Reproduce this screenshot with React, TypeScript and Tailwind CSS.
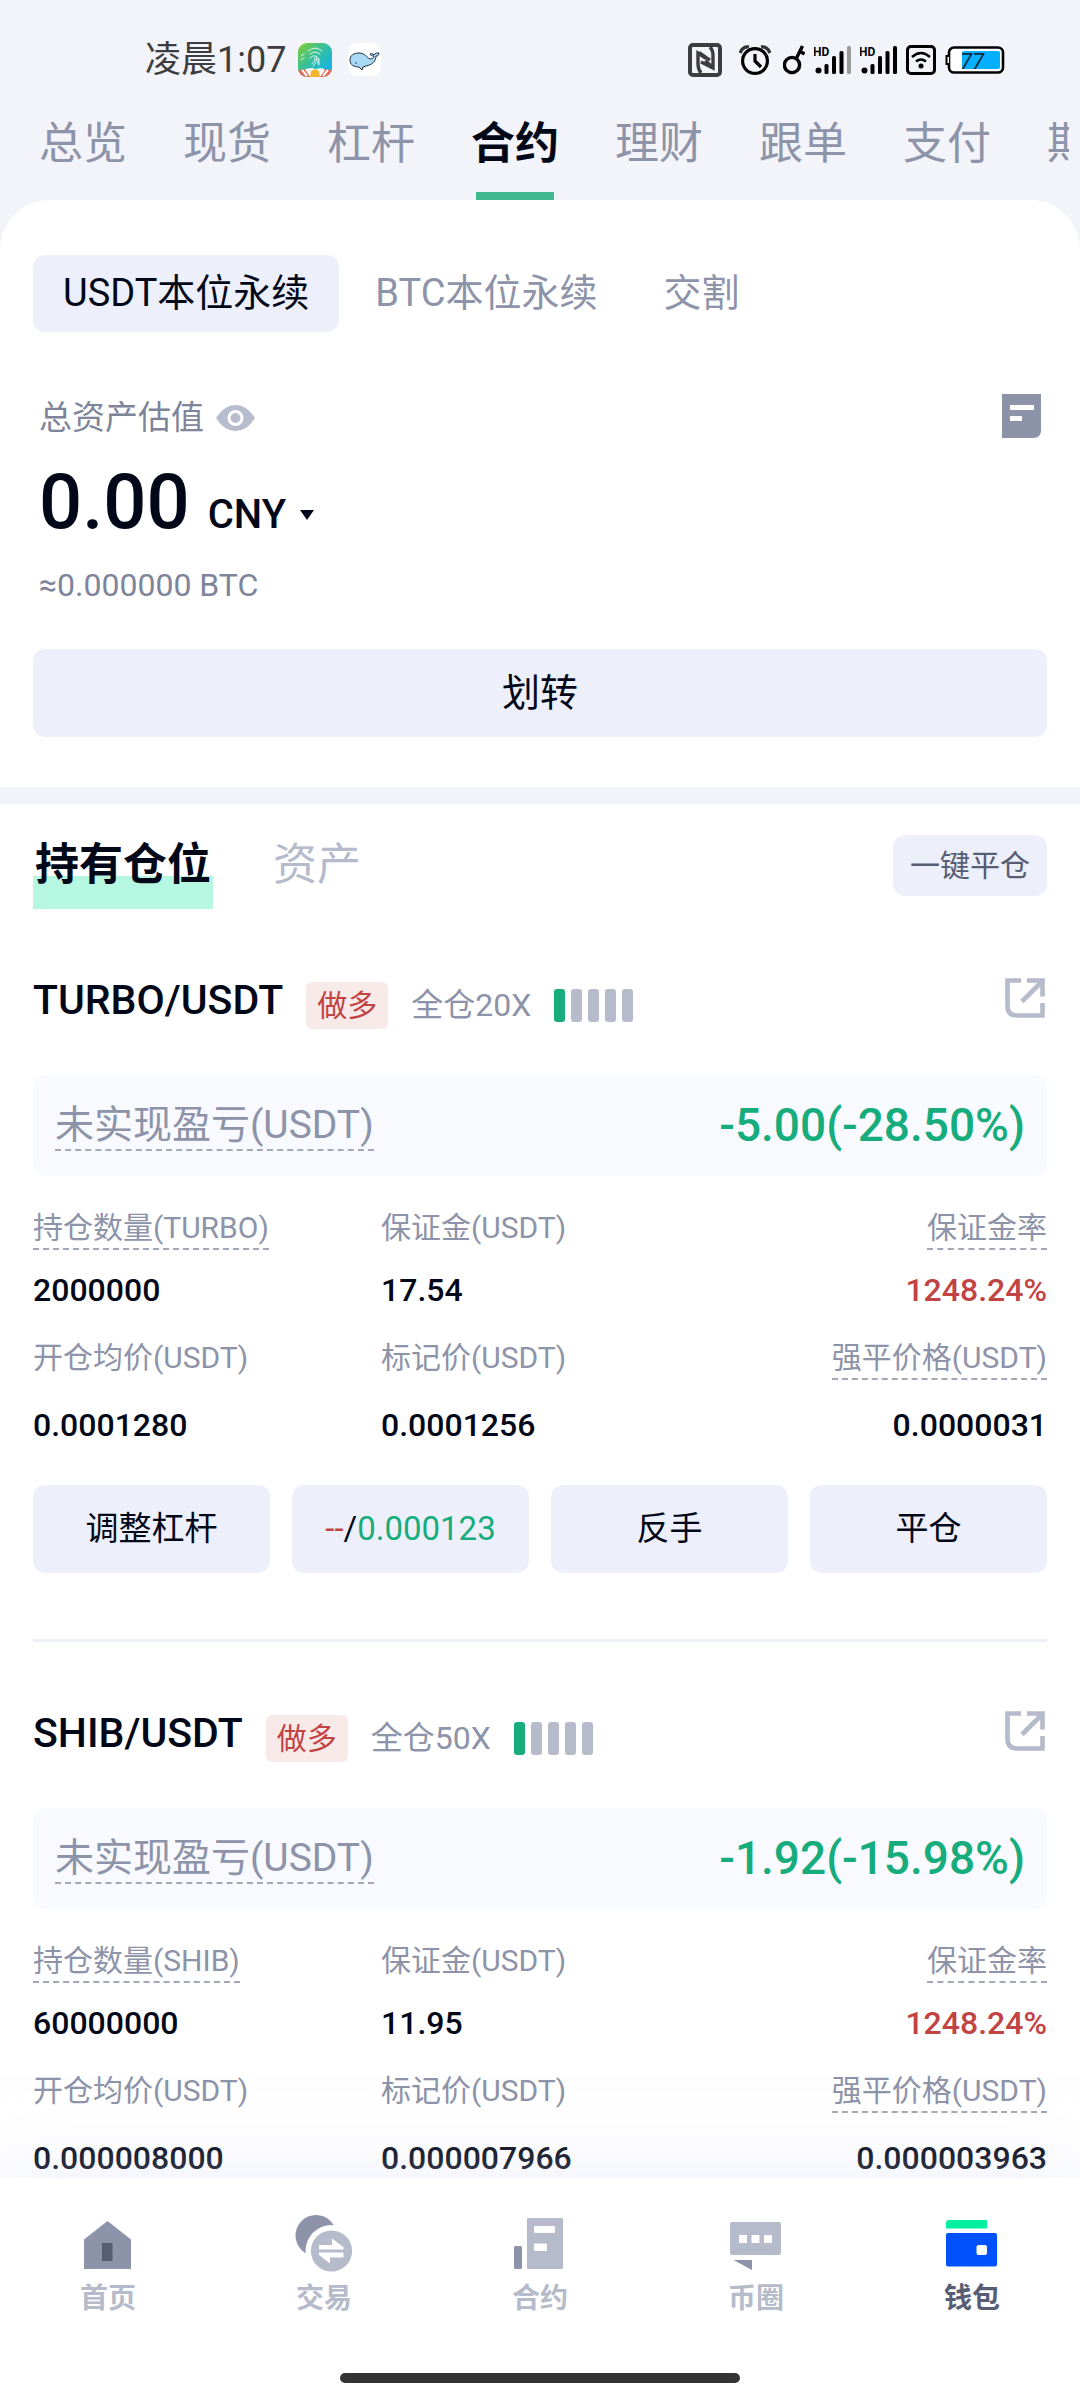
// src/App.tsx
// ================== IMPORTS
import { useState } from "react";
import type { ReactNode } from "react";
import clsx from "clsx";

// ================== TYPES
type Field = {
	label: string;
	value: string;
	dashed?: boolean;
	danger?: boolean;
};

type Position = {
	pair: string;
	side: string;
	leverage: string;
	pnl: string;
	size: Field[];
	price: Field[];
	stop?: string;
};

type NavItem = {
	label: string;
	icon: ReactNode;
};

// ================== DATA
const accountTabs = ["总览", "现货", "杠杆", "合约", "理财", "跟单", "支付", "期权"];

const contractTabs = ["USDT本位永续", "BTC本位永续", "交割"];

const positions: Position[] = [
	{
		pair: "TURBO/USDT",
		side: "做多",
		leverage: "全仓20X",
		pnl: "-5.00(-28.50%)",
		size: [
			{ label: "持仓数量(TURBO)", value: "2000000", dashed: true },
			{ label: "保证金(USDT)", value: "17.54" },
			{ label: "保证金率", value: "1248.24%", dashed: true, danger: true },
		],
		price: [
			{ label: "开仓均价(USDT)", value: "0.0001280" },
			{ label: "标记价(USDT)", value: "0.0001256" },
			{ label: "强平价格(USDT)", value: "0.0000031", dashed: true },
		],
		stop: "0.000123",
	},
	{
		pair: "SHIB/USDT",
		side: "做多",
		leverage: "全仓50X",
		pnl: "-1.92(-15.98%)",
		size: [
			{ label: "持仓数量(SHIB)", value: "60000000", dashed: true },
			{ label: "保证金(USDT)", value: "11.95" },
			{ label: "保证金率", value: "1248.24%", dashed: true, danger: true },
		],
		price: [
			{ label: "开仓均价(USDT)", value: "0.000008000" },
			{ label: "标记价(USDT)", value: "0.000007966" },
			{ label: "强平价格(USDT)", value: "0.000003963", dashed: true },
		],
	},
];

// ================== STATUS BAR ICONS
const FingerprintApp = () => (
	<svg width="34" height="34" viewBox="0 0 34 34" aria-hidden="true">
		<defs>
			<linearGradient id="finger" x1="0" y1="0" x2="1" y2="1">
				<stop offset="0" stopColor="#86cf2c" />
				<stop offset="0.45" stopColor="#35bfa0" />
				<stop offset="1" stopColor="#04b0ff" />
			</linearGradient>
			<clipPath id="fingerClip">
				<rect width="34" height="34" rx="9" />
			</clipPath>
		</defs>
		<g clipPath="url(#fingerClip)">
			<rect width="34" height="34" fill="url(#finger)" />
			<g fill="none" stroke="#d9f5ec" strokeWidth="1" strokeLinecap="round">
				<path d="M10 8q7-6 14 0M12 11q5-4 10 0M12 15q5-5 9 1v6M14 21q3-2 3-6M18 14q2 4-3 9M20 16v5M3 13l3-2M3 17l3-2" />
			</g>
			<path d="M0 27l9-1h16l9 1v7H0z" fill="#e9654e" />
			<path d="M7 26l7-1 4 1 6-1 3 2-5 7H12z" fill="#fff" />
			<path d="M13 28l4-2 4 2 1 6H12z" fill="#f2b630" />
			<path d="M4 27l5 6M30 27l-5 6" stroke="#fff" strokeWidth="2" />
		</g>
	</svg>
);

const WhaleApp = () => (
	<svg width="33" height="33" viewBox="0 0 33 33" aria-hidden="true">
		<rect width="33" height="33" rx="9" fill="#fff" />
		<path
			d="M2 17c0-5 4-7 9-7 6 0 8 5 11 6 2 0 4-1 4-3-2 0-4-1-4-2 2-1 3 0 4 1 1-2 3-2 5-2 0 2-1 3-3 3 0 5-4 9-10 10l-3 1-1 3-3-3c-5 0-9-2-9-7z"
			fill="#a9daf5"
			stroke="#20303d"
			strokeWidth="1"
			strokeLinejoin="round"
		/>
		<circle cx="8" cy="20" r="0.8" fill="#20303d" />
	</svg>
);

const NfcIcon = () => (
	<svg width="34" height="34" viewBox="0 0 34 34" fill="none" stroke="#3d3d3f" aria-hidden="true">
		<rect x="2" y="2" width="30" height="30" rx="3" strokeWidth="4" />
		<path d="M13 30q-3-4-3-9V10l12 7M22 4q3 3 3 9v12l-12-6" strokeWidth="3.4" />
		<path d="M11 10l7 5M24 24l-7-6" strokeWidth="4" />
	</svg>
);

const AlarmIcon = () => (
	<svg width="32" height="30" viewBox="0 0 32 30" fill="none" stroke="#000" aria-hidden="true">
		<circle cx="16" cy="16" r="12.4" strokeWidth="3.2" />
		<path d="M16 9v7l6 6" strokeWidth="3.2" />
		<path d="M1 8Q4 1 10 2M31 8Q28 1 22 2" strokeWidth="3.4" stroke="#333" />
	</svg>
);

const KeyIcon = () => (
	<svg width="22" height="30" viewBox="0 0 22 30" fill="none" stroke="#000" aria-hidden="true">
		<circle cx="9" cy="20" r="7.6" strokeWidth="3.4" />
		<path d="M13 14L19.500 1M16.500 6l5 3" strokeWidth="3.4" />
	</svg>
);

const SignalIcon = ({ last }: { last: string }) => (
	<svg width="37" height="28" viewBox="0 0 37 28" aria-hidden="true">
		<text x="-1" y="10" fontSize="12" fontWeight="700" fontFamily="Roboto, sans-serif">
			HD
		</text>
		<circle cx="4.500" cy="24.500" r="3" />
		<rect x="10.500" y="18" width="4" height="10" rx="1.500" />
		<rect x="18" y="10" width="4" height="18" rx="1.500" />
		<rect x="25.500" y="5" width="4" height="23" rx="1.500" />
		<rect x="33" y="0" width="4" height="28" rx="1.500" fill={last} />
	</svg>
);

const WifiIcon = () => (
	<svg width="30" height="30" viewBox="0 0 30 30" fill="none" stroke="#000" aria-hidden="true">
		<rect x="1.500" y="1.500" width="27" height="27" rx="3.500" strokeWidth="3" />
		<path d="M6 12q9-8 18 0M10 16.500q5-4 10 0" strokeWidth="2.400" />
		<circle cx="15" cy="21" r="2.500" fill="#000" stroke="none" />
	</svg>
);

const BatteryIcon = () => (
	<svg width="60" height="28" viewBox="0 0 60 28" aria-hidden="true">
		<rect x="4" y="1.500" width="54" height="25" rx="5" fill="#fff" stroke="#000" strokeWidth="2.600" />
		<path d="M4 10H1.500v8H4" fill="#fff" stroke="#000" strokeWidth="2" />
		<rect x="17" y="5" width="38" height="18" rx="2" fill="#04b0ff" />
		<text x="15" y="22.500" fontSize="22" fontStyle="italic" fill="#0d2b3c" fontFamily="Roboto, sans-serif">
			77
		</text>
	</svg>
);

// ================== PAGE ICONS
const EyeIcon = () => (
	<svg width="39" height="26" viewBox="0 0 39 26" aria-hidden="true">
		<path d="M0 13Q8 0 19.500 0T39 13Q31 26 19.500 26T0 13z" fill="#b8bdce" />
		<circle cx="19.500" cy="13" r="6.500" fill="none" stroke="#fff" strokeWidth="3" />
	</svg>
);

const RecordIcon = () => (
	<svg width="39" height="44" viewBox="0 0 39 44" aria-hidden="true">
		<path d="M0 0h39v36q0 8-8 8H0z" fill="#8d93a8" />
		<path d="M8 11h24v5H8zM8 22h12v5H8z" fill="#fff" />
	</svg>
);

const ShareIcon = () => (
	<svg width="42" height="42" viewBox="0 0 42 42" fill="none" stroke="#b5bbca" strokeWidth="4.600" aria-hidden="true">
		<path d="M16 2.500H2.500V28Q2.500 37.500 12 37.500H37.500V25" />
		<path d="M22 2.500H37.500V18.500M36.500 4L17 23.500" />
	</svg>
);

const HomeIcon = () => (
	<svg width="56" height="56" viewBox="0 0 56 56" aria-hidden="true">
		<path d="M27.500 7L51 25.500V55H4V25.500z" fill="#8d93a8" />
		<rect x="22" y="29" width="10.500" height="18" fill="#575d73" />
	</svg>
);

const TradeIcon = () => (
	<svg width="56" height="56" viewBox="0 0 56 56" className="overflow-visible" aria-hidden="true">
		<circle cx="20" cy="21.500" r="20.500" fill="#8d93a8" />
		<circle cx="35.500" cy="37" r="26" fill="#fff" />
		<circle cx="35.500" cy="37" r="20.600" fill="#b5bbca" />
		<path d="M23 31H36V24.500L47.500 33V35.500H23zM23 38.500H47.500V43.500H34V49.500L23 41z" fill="#fff" />
	</svg>
);

const ContractIcon = () => (
	<svg width="56" height="56" viewBox="0 0 56 56" aria-hidden="true">
		<rect x="2" y="32" width="8" height="23" rx="1.500" fill="#8d93a8" />
		<rect x="15" y="4" width="36" height="51" rx="1" fill="#b5bbca" />
		<rect x="22" y="12" width="21" height="7" rx="1" fill="#fff" />
		<rect x="22" y="29.500" width="13" height="7.500" rx="1" fill="#fff" />
	</svg>
);

const ChatIcon = () => (
	<svg width="56" height="56" viewBox="0 0 56 56" aria-hidden="true">
		<rect x="2" y="8" width="51" height="33" rx="2" fill="#b5bbca" />
		<path d="M11 21h8v8h-8zM23.500 21h8v8h-8zM36 21h8v8h-8z" fill="#fff" />
		<path d="M5.500 46H24V56z" fill="#8d93a8" />
	</svg>
);

const WalletIcon = () => (
	<svg width="56" height="56" viewBox="0 0 56 56" aria-hidden="true">
		<path d="M2 14.500V9q0-3 3-3H43V14.500z" fill="#00f0a0" />
		<rect x="2" y="19" width="51" height="33.500" rx="2" fill="#0052ff" />
		<rect x="32.500" y="31" width="10.500" height="10" rx="2" fill="#fff" />
	</svg>
);

const navItems: NavItem[] = [
	{ label: "首页", icon: <HomeIcon /> },
	{ label: "交易", icon: <TradeIcon /> },
	{ label: "合约", icon: <ContractIcon /> },
	{ label: "币圈", icon: <ChatIcon /> },
	{ label: "钱包", icon: <WalletIcon /> },
];

// ================== STATUS BAR
const StatusBar = () => (
	<div className="flex h-[88px] items-center justify-between pt-8 pr-[75px] pl-[145px]">
		<div className="flex items-center">
			<span className="text-[36px] leading-10 text-[#3d3d3f]">凌晨1:07</span>
			<span className="ml-3 flex gap-4">
				<FingerprintApp />
				<WhaleApp />
			</span>
		</div>
		<div className="flex items-center gap-[9px]">
			<span className="mr-[3px] flex items-center gap-[17px]">
				<NfcIcon />
				<AlarmIcon />
			</span>
			<KeyIcon />
			<SignalIcon last="#999" />
			<SignalIcon last="#000" />
			<WifiIcon />
			<BatteryIcon />
		</div>
	</div>
);

// ================== FIELD ROW
const FieldRow = ({ fields, className }: { fields: Field[]; className: string }) => (
	<dl className="grid grid-cols-[348fr_333fr_333fr]">
		{fields.map((field) => (
			<div
				key={field.label}
				className={clsx("flex flex-col items-start last:items-end", className)}
			>
				<dt
					className={clsx(
						"h-[42px] text-[30px] leading-10 whitespace-nowrap text-[#8d93a8]",
						field.dashed && "border-b-2 border-dashed border-[#a3a8b8]",
					)}
				>
					{field.label}
				</dt>
				<dd
					className={clsx(
						"text-[32px] leading-10 font-medium",
						field.danger ? "text-[#c24343]" : "text-[#030818]",
					)}
				>
					{field.value}
				</dd>
			</div>
		))}
	</dl>
);

// ================== POSITION CARD
const PositionCard = ({ position }: { position: Position }) => (
	<article className="pt-[63px]">
		{/* =========================== CARD HEADER */}
		<div className="flex items-center justify-between">
			<div className="flex items-end gap-[23px]">
				<h3 className="text-[41px] leading-[57px] font-medium">{position.pair}</h3>
				<span className="rounded-md bg-[#f9eaea] px-[11px] text-[30px] leading-[47px] text-[#c24343]">
					{position.side}
				</span>
				<span className="text-[32px] leading-[47px] text-[#8d93a8]">
					{position.leverage}
				</span>
				<span className="flex h-[47px] items-center gap-[6px]">
					{[0, 1, 2, 3, 4].map((bar) => (
						<span
							key={bar}
							className={clsx(
								"h-[33px] w-[11px] rounded-[3px]",
								bar === 0 ? "bg-[#16ac7c]" : "bg-[#b5bbca]",
							)}
						/>
					))}
				</span>
			</div>
			<button type="button" aria-label="分享" className="pb-1">
				<ShareIcon />
			</button>
		</div>

		{/* =========================== UNREALIZED PNL */}
		<div className="mt-[46px] mb-8 flex h-[101px] items-center justify-between rounded-xl bg-[#f8faff] px-[22px]">
			<span className="border-b-2 border-dashed border-[#a3a8b8] text-[39px] leading-[48px] text-[#8d93a8]">
				未实现盈亏(USDT)
			</span>
			<span className="text-[46px] font-medium text-[#16ac7c]">{position.pnl}</span>
		</div>

		{/* =========================== FIELDS */}
		<FieldRow fields={position.size} className="gap-5 pb-7" />
		<FieldRow fields={position.price} className="gap-[25px]" />

		{/* =========================== ACTIONS */}
		{position.stop && (
			<div className="mt-10 grid grid-cols-4 gap-[22px] border-b-[3px] border-[#eef0f8] pb-[66px] text-[33px]">
				<button type="button" className="h-[88px] rounded-xl bg-[#edf0fa]">
					调整杠杆
				</button>
				<button type="button" className="h-[88px] rounded-xl bg-[#edf0fa]">
					<span className="text-[#c24343]">--</span>/
					<span className="text-[#16ac7c]">{position.stop}</span>
				</button>
				<button type="button" className="h-[88px] rounded-xl bg-[#edf0fa]">
					反手
				</button>
				<button type="button" className="h-[88px] rounded-xl bg-[#edf0fa]">
					平仓
				</button>
			</div>
		)}
	</article>
);

// ================== APP
const App = () => {
	const [account, setAccount] = useState("合约");
	const [contract, setContract] = useState("USDT本位永续");
	const [nav, setNav] = useState("钱包");

	return (
		<div className="flex min-h-screen flex-col bg-[#f3f4f9] font-['Roboto','Noto_Sans_CJK_SC',sans-serif] text-[#030818]">
			{/* =========================== HEADER */}
			<header>
				<StatusBar />
				<div className="mr-[11px] flex gap-14 overflow-hidden pl-[39px]">
					{accountTabs.map((tab) => (
						<button
							key={tab}
							type="button"
							onClick={() => setAccount(tab)}
							className={clsx(
								"relative h-28 shrink-0 text-[44px] leading-none",
								tab === account ? "font-bold" : "text-[#8d93a8]",
							)}
						>
							{tab}
							{tab === account && (
								<span className="absolute bottom-0 left-[5px] h-2 w-[78px] bg-[#41b88f]" />
							)}
						</button>
					))}
				</div>
			</header>

			<main className="grow rounded-t-[50px] bg-white">
				{/* =========================== ASSETS */}
				<section className="px-[33px] pt-[55px] pb-[50px]">
					<div className="flex gap-[6px]">
						{contractTabs.map((tab) => (
							<button
								key={tab}
								type="button"
								onClick={() => setContract(tab)}
								className={clsx(
									"h-[77px] rounded-xl px-[30px] text-[38px]",
									tab === contract ? "bg-[#edf0fa]" : "text-[#8d93a8]",
								)}
							>
								{tab}
							</button>
						))}
					</div>

					<div className="mt-[62px] px-[6px]">
						<div className="flex items-start justify-between">
							<div className="flex items-center gap-3 text-[33px] leading-[48px] text-[#7e8499]">
								总资产估值
								<button type="button" aria-label="隐藏资产">
									<EyeIcon />
								</button>
							</div>
							<button type="button" aria-label="资金记录">
								<RecordIcon />
							</button>
						</div>
						<div className="mt-5 flex items-baseline leading-[80px] font-medium">
							<span className="text-[76px]">0.00</span>
							<button type="button" className="ml-[18px] flex items-center text-[40px]">
								CNY
								<span className="ml-[14px] border-x-[7px] border-t-[10px] border-x-transparent border-t-[#030818]" />
							</button>
						</div>
						<p className="mt-[10px] text-[32px] leading-10 text-[#7e8499]">
							≈0.000000 BTC
						</p>
					</div>

					<button
						type="button"
						className="mt-11 h-[88px] w-full rounded-xl bg-[#edf0fa] text-[38px]"
					>
						划转
					</button>
				</section>

				<div className="h-[17px] bg-[#f3f4f9]" />

				{/* =========================== POSITIONS */}
				<section className="px-[33px] pt-[17px]">
					<div className="flex items-center">
						<button
							type="button"
							className="relative h-[88px] px-[2px] text-[44px] font-bold"
						>
							<span className="absolute inset-x-0 bottom-0 h-[33px] bg-[#b5f7e1]" />
							<span className="relative">持有仓位</span>
						</button>
						<button type="button" className="ml-[60px] text-[44px] text-[#b5bbca]">
							资产
						</button>
						<button
							type="button"
							className="ml-auto h-[61px] rounded-xl bg-[#edf0fa] px-[17px] text-[30px] text-[#575d73]"
						>
							一键平仓
						</button>
					</div>

					{positions.map((position) => (
						<PositionCard key={position.pair} position={position} />
					))}
				</section>
			</main>

			{/* =========================== BOTTOM NAV */}
			<nav className="sticky bottom-0 bg-white pt-9 pb-[17px] shadow-[0_0_70px_rgba(219,223,243,0.5)]">
				<div className="grid grid-cols-5">
					{navItems.map((item) => (
						<button
							key={item.label}
							type="button"
							onClick={() => setNav(item.label)}
							className={clsx(
								"flex flex-col items-center gap-[11px] text-[28px] leading-9 font-bold",
								item.label === nav ? "text-[#575d73]" : "text-[#b5bbca]",
							)}
						>
							{item.icon}
							{item.label}
						</button>
					))}
				</div>
				<div className="mx-auto mt-14 h-[10px] w-[37%] rounded-full bg-[#333]" />
			</nav>
		</div>
	);
};

export default App;
